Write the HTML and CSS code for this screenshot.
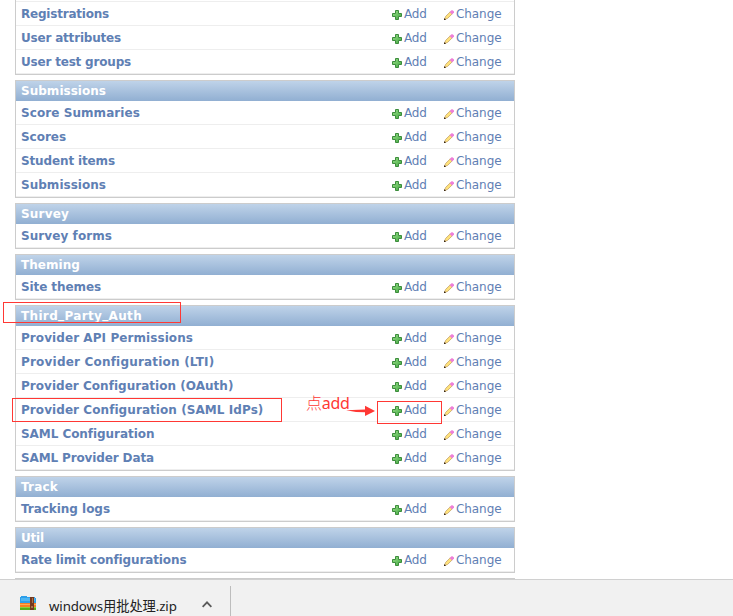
FILE: index.html
```
<!DOCTYPE html>
<html lang="zh-CN">
<head>
<meta charset="utf-8">
<title>Site administration</title>
<link rel="stylesheet" href="styles.css">
</head>
<body>
<svg width="0" height="0" class="defs">
  <defs>
    <linearGradient id="green" x1="0" y1="0" x2="1" y2="1"><stop offset="0" stop-color="#9be08a"/><stop offset="1" stop-color="#3fa63f"/></linearGradient>
    <symbol id="plus" viewBox="0 0 10 10"><path d="M3.5 .5h3v3h3v3h-3v3h-3v-3h-3v-3h3z" fill="url(#green)" stroke="#3c8c3c"/></symbol>
    <symbol id="pencil" viewBox="0 0 10 10">
      <path d="M.6 9.4l1-3L6.3 1.8l2 2-4.7 4.6z" fill="#ffe27a" stroke="#c4a56c" stroke-width=".8"/>
      <path d="M5.7 2L7.5.2h1L10 1.6v1L8.1 4.4z" fill="#ee7fd8"/>
      <path d="M0 8.6h1v.6h.8v.8H0z" fill="#38250f"/>
    </symbol>
  </defs>
</svg>
<main class="page">
  <div class="content" id="content"></div>
  <div class="mark mark-title"></div>
  <div class="mark mark-row"></div>
  <div class="mark mark-add"></div>
  <div class="note"><span class="note-cjk">点</span>add</div>
  <svg class="arrow" width="30" height="12" viewBox="0 0 30 12"><path d="M0 5.2L19 4.6V.8L29 6 19 11V7.2L10 7z" fill="#ff3834"/></svg>
</main>
<footer class="downloads">
  <div class="download">
    <svg class="zip" width="16" height="14" viewBox="0 0 16 14" shape-rendering="crispEdges">
      <path d="M0 1h1V0h5l1 1h8v1h1v6H0z" fill="#2d9fea"/>
      <path d="M1 2h14v3H1z" fill="#4fb6f2"/>
      <path d="M0 7h16v4H0z" fill="#f57f24"/>
      <path d="M0 8h16v1H0z" fill="#ffac55"/>
      <path d="M0 11h16v3H0z" fill="#55ad1e"/>
      <path d="M0 11h16v1H0z" fill="#8bd13c"/>
      <path d="M10 1h4v13h-4z" fill="#74381e"/>
      <path d="M12 2h1v5h-1zM11 10h2v2h-2z" fill="#a8744c"/>
    </svg>
    <span class="filename">windows用批处理.zip</span>
    <svg class="chevron" width="10" height="7" viewBox="0 0 10 7"><path d="M.6 5.9L5 1.4l4.4 4.5" fill="none" stroke="#5a5a5a" stroke-width="1.9"/></svg>
  </div>
</footer>
<script src="app.js"></script>
</body>
</html>
```
FILE: styles.css
```
body { margin: 0; background: #fff; height: 616px; overflow: hidden; display: flex; flex-direction: column; }
.defs { position: absolute; }
.page { position: relative; height: 579px; overflow: hidden; flex: none; }
.content { width: 500px; margin-left: 15px; display: flex; flex-direction: column; gap: 5px; }
.module { border: 1px solid #ccc; font: 12px/20px "DejaVu Sans", sans-serif; color: #5f80b4; }
.module.continued { border-top: 0; }
.sliver { height: 1px; border-bottom: 1px solid #eee; }
.caption { height: 20px; padding-left: 5px; font-weight: bold; color: #fff; background: linear-gradient(#bfd3e9, #91afd2); }
.caption i { font-style: normal; position: relative; top: -2px; }
.row { height: 23px; border-bottom: 1px solid #eee; display: grid; grid-template-columns: 376px 52px 1fr; line-height: 25px; }
.name { padding-left: 5px; font-weight: bold; }
.action { display: flex; align-items: flex-start; height: 23px; }
.action svg { width: 10px; height: 10px; margin: 8px 2px 0 0; flex: none; }
.name span, .caption span, .action span { white-space: nowrap; }
.mark { position: absolute; box-sizing: border-box; border: 1px solid #ff3834; }
.mark-title { left: 3px; top: 302px; width: 178px; height: 21px; }
.mark-row { left: 12px; top: 398px; width: 270px; height: 24px; }
.mark-add { left: 377px; top: 401px; width: 65px; height: 23px; }
.note { position: absolute; left: 306px; top: 391px; font: 16px/22px "Noto Sans", "Noto Sans CJK SC", sans-serif; letter-spacing: -.3px; color: #ff3834; white-space: nowrap; }
.note-cjk { font-family: "Noto Sans CJK SC", sans-serif; font-weight: 300; }
.arrow { position: absolute; left: 346px; top: 405px; }
.downloads { height: 36px; flex: none; border-top: 1px solid #d0d0d0; background: #f1f1f1; }
.download { box-sizing: border-box; width: 231px; height: 30px; margin-top: 6px; padding-left: 20px; border-right: 1px solid #bdbdbd; display: flex; align-items: flex-start; }
.zip { margin-top: 10px; }
.filename { margin: 10px 0 0 13px; width: 128px; font: 13.3px/20px "Noto Sans", "Noto Sans CJK SC", sans-serif; letter-spacing: -.12px; color: #222; white-space: nowrap; }
.chevron { margin: 15px 0 0 25px; }
```
FILE: app.js
```
// [caption, caption text width, [model name, text width]...]
const modules = [
  [null, 0, ["Registrations", 88], ["User attributes", 100], ["User test groups", 110]],
  ["Submissions", 85, ["Score Summaries", 119], ["Scores", 45], ["Student items", 94], ["Submissions", 85]],
  ["Survey", 48, ["Survey forms", 91]],
  ["Theming", 59, ["Site themes", 80]],
  ["Third<i>_</i>Party<i>_</i>Auth", 121, ["Provider API Permissions", 172], ["Provider Configuration (LTI)", 193], ["Provider Configuration (OAuth)", 212], ["Provider Configuration (SAML IdPs)", 242], ["SAML Configuration", 133], ["SAML Provider Data", 133]],
  ["Track", 37, ["Tracking logs", 89]],
  ["Util", 23, ["Rate limit configurations", 165]],
  ["", 0]
];
const label = (text, width) => `<span data-width="${width}">${text}</span>`;
const action = (icon, text, width) => `<div class="action"><svg><use href="#${icon}"/></svg>${label(text, width)}</div>`;
document.getElementById("content").innerHTML = modules.map(([caption, width, ...rows]) =>
  `<section class="module${caption === null ? " continued" : ""}">` +
  (caption === null ? '<div class="sliver"></div>' : `<div class="caption">${label(caption, width)}</div>`) +
  rows.map(([name, w]) => `<div class="row"><div class="name">${label(name, w)}</div>${action("plus", "Add", 22.5)}${action("pencil", "Change", 45.5)}</div>`).join("") +
  "</section>").join("");
document.querySelectorAll("[data-width]").forEach(el => {
  const n = el.textContent.length;
  if (n) el.style.letterSpacing = (el.dataset.width - el.getBoundingClientRect().width) / n + "px";
});
```
